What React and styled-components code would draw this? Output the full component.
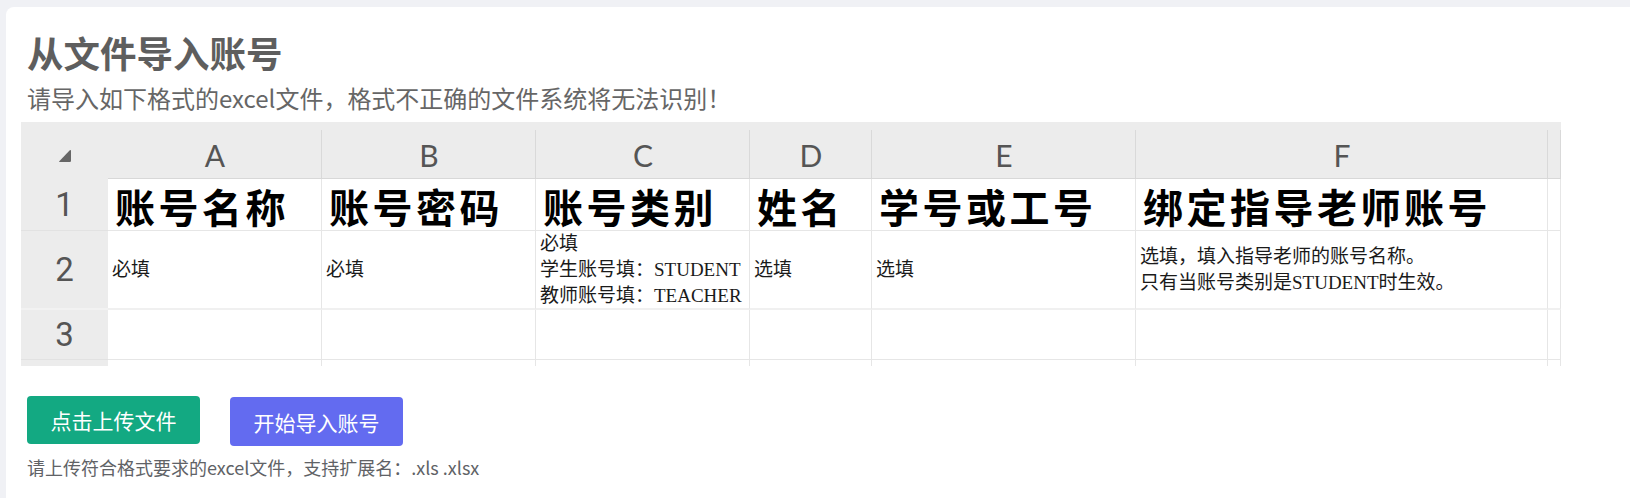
import React from "react";
import styled, { createGlobalStyle } from "styled-components";

const GlobalStyle = createGlobalStyle`
  html, body {
    margin: 0;
    padding: 0;
    background: #f0f1f5;
  }
  body {
    font-family: "Noto Sans CJK SC", "Noto Sans", sans-serif;
    overflow: hidden;
  }
`;

const columns = [
  { key: "A", width: 214, title: "账号名称", desc: ["必填"] },
  { key: "B", width: 214, title: "账号密码", desc: ["必填"] },
  {
    key: "C",
    width: 214,
    title: "账号类别",
    desc: ["必填", "学生账号填：STUDENT", "教师账号填：TEACHER"],
  },
  { key: "D", width: 122, title: "姓名", desc: ["选填"] },
  { key: "E", width: 264, title: "学号或工号", desc: ["选填"] },
  {
    key: "F",
    width: 412,
    title: "绑定指导老师账号",
    desc: ["选填，填入指导老师的账号名称。", "只有当账号类别是STUDENT时生效。"],
  },
  { key: "", width: 13, title: "", desc: [] },
];

const rowHeights = [57, 52, 79, 50, 6];

const App = () => {
  const template = `87px ${columns.map((c) => c.width + "px").join(" ")}`;
  const rows = rowHeights.map((h) => h + "px").join(" ");

  return (
    <>
      <GlobalStyle />
      <Card>
        <Title>从文件导入账号</Title>
        <Subtitle>请导入如下格式的excel文件，格式不正确的文件系统将无法识别！</Subtitle>

        <Sheet style={{ gridTemplateColumns: template, gridTemplateRows: rows }}>
          <Corner>
            <svg width="16" height="16" viewBox="0 0 16 16">
              <path
                d="M14 2.6 L14 12.8 Q14 14 12.8 14 L2.6 14 Q1.6 14 2.3 13.2 L12.8 2.3 Q14 1.5 14 2.6 Z"
                fill="#666"
              />
            </svg>
          </Corner>
          {columns.map((c, i) => (
            <ColHead key={"h" + i}>{c.key}</ColHead>
          ))}

          <RowNum>1</RowNum>
          {columns.map((c, i) => (
            <TitleCell key={"t" + i}>{c.title}</TitleCell>
          ))}

          <RowNum $thick>2</RowNum>
          {columns.map((c, i) => (
            <DescCell key={"d" + i} $thick>
              {c.desc.map((line) => (
                <span key={line}>{line}</span>
              ))}
            </DescCell>
          ))}

          <RowNum>3</RowNum>
          {columns.map((c, i) => (
            <Cell key={"e" + i} />
          ))}

          <RowNum $cut />
          {columns.map((c, i) => (
            <Cell key={"f" + i} $cut />
          ))}
        </Sheet>

        <Actions>
          <Button $color="#13a982">点击上传文件</Button>
          <Button $color="#636bf0" $offset>
            开始导入账号
          </Button>
        </Actions>
        <Hint>请上传符合格式要求的excel文件，支持扩展名：.xls .xlsx</Hint>
      </Card>
    </>
  );
};

export default App;

const Card = styled.div`
  margin: 7px 0 0 6px;
  min-height: 520px;
  background: #fff;
  border-radius: 8px 0 0 0;
  padding: 23px 0 0 15px;
  box-sizing: border-box;
`;

const Title = styled.h1`
  margin: 0 0 0 6px;
  font-size: 36.5px;
  line-height: 46px;
  font-weight: 700;
  color: #5e5e5e;
`;

const Subtitle = styled.p`
  margin: 6px 0 0 6px;
  font-size: 24px;
  line-height: 32px;
  color: #666;
`;

const Sheet = styled.div`
  margin-top: 8px;
  display: grid;
  width: max-content;
  background: #fff;
`;

const Corner = styled.div`
  display: flex;
  align-items: center;
  justify-content: center;
  padding-top: 10px;
  background: #ececec;
`;

const ColHead = styled.div`
  display: flex;
  align-items: center;
  justify-content: center;
  padding-top: 10px;
  font-family: Lato, "Open Sans", sans-serif;
  font-size: 30px;
  color: #555;
  background: linear-gradient(#d9d9d9, #d9d9d9) right 8px / 1px calc(100% - 8px)
      no-repeat,
    #ececec;
  border-bottom: 1px solid #d8d8d8;
`;

const RowNum = styled.div`
  display: flex;
  align-items: center;
  justify-content: center;
  font-family: Roboto, "Open Sans", sans-serif;
  font-size: 33px;
  color: #555;
  background: #ececec;
  border-bottom: ${(p) => (p.$thick ? "2px solid #f2f2f2" : p.$cut ? "none" : "1px solid #e2e2e2")};
`;

const Cell = styled.div`
  border-right: 1px solid #e6e6e6;
  border-bottom: ${(p) => (p.$thick ? "2px solid #f0f0f0" : p.$cut ? "none" : "1px solid #e6e6e6")};
  box-sizing: border-box;
`;

const TitleCell = styled(Cell)`
  display: flex;
  align-items: flex-end;
  padding-left: 7px;
  font-size: 40px;
  line-height: 48px;
  font-weight: 700;
  letter-spacing: 3.5px;
  color: #000;
  white-space: nowrap;
`;

const DescCell = styled(Cell)`
  display: flex;
  flex-direction: column;
  justify-content: center;
  padding-left: 4px;
  font-family: "Liberation Serif", "Noto Sans CJK SC", serif;
  font-size: 19px;
  line-height: 26px;
  color: #1a1a1a;
  white-space: nowrap;
`;

const Actions = styled.div`
  display: flex;
  align-items: flex-start;
  gap: 30px;
  margin: 30px 0 0 6px;
`;

const Button = styled.button`
  width: 173px;
  height: ${(p) => (p.$offset ? "49px" : "48px")};
  margin-top: ${(p) => (p.$offset ? "1px" : "0")};
  border: none;
  border-radius: 4px;
  background: ${(p) => p.$color};
  color: #fff;
  font-family: "Noto Sans CJK SC", sans-serif;
  font-size: 21px;
  cursor: pointer;
`;

const Hint = styled.p`
  margin: 9px 0 0 6px;
  font-size: 18px;
  line-height: 25px;
  color: #606266;
`;
